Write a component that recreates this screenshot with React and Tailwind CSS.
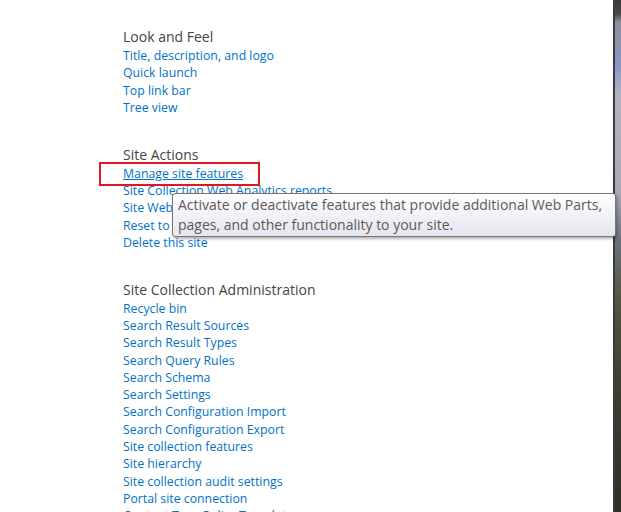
import React from 'react'

const SECTIONS = [
  {
    title: 'Look and Feel',
    links: ['Title, description, and logo', 'Quick launch', 'Top link bar', 'Tree view'],
  },
  {
    title: 'Site Actions',
    links: [
      'Manage site features',
      'Site Collection Web Analytics reports',
      'Site Web Analytics reports',
      'Reset to site definition',
      'Delete this site',
    ],
  },
  {
    title: 'Site Collection Administration',
    links: [
      'Recycle bin',
      'Search Result Sources',
      'Search Result Types',
      'Search Query Rules',
      'Search Schema',
      'Search Settings',
      'Search Configuration Import',
      'Search Configuration Export',
      'Site collection features',
      'Site hierarchy',
      'Site collection audit settings',
      'Portal site connection',
      'Content Type Policy Templates',
    ],
  },
]

export default function App() {
  return (
    <div className="relative flex h-[512px] w-[621px] overflow-hidden bg-white font-['Open_Sans',sans-serif]">
      {/* settings page */}
      <div className="flex flex-1 flex-col gap-[27.5px] pl-[123px] pt-[26px]">
        {SECTIONS.map(s => (
          <div key={s.title}>
            <div className="text-[14px] leading-[21px] text-[#444444]">{s.title}</div>
            <ul>
              {s.links.map(l => (
                <li key={l} className="text-[12.3px] leading-[17.3px] text-[#0072c6]">
                  <a href="#" className={l === 'Manage site features' ? 'underline' : ''}>{l}</a>
                </li>
              ))}
            </ul>
          </div>
        ))}
      </div>

      {/* window edge + desktop */}
      <div className="w-[2px] bg-[#3a3a3a]" />
      <div className="w-[6px] bg-[linear-gradient(to_bottom,#3b3b3b_0px,#474747_14px,#8e8f9e_22px,#8798c4_65px,#b3b4c2_95px,#a9aab8_190px,#6d7280_240px,#52563f_300px,#3d4130_380px,#2e2f27_512px)]" />

      {/* red highlight */}
      <div className="absolute left-[99px] top-[162px] h-[24px] w-[161px] border-2 border-[#e3161e]" />

      {/* tooltip */}
      <div className="absolute left-[172px] top-[193px] h-[44px] w-[444px] rounded-[3px] border border-[#767676] bg-[linear-gradient(to_bottom,#ffffff,#e4e5f0)] px-[5px] pt-[1px] text-[14px] leading-[20px] text-[#5a5a5a] shadow-[1px_2px_3px_rgba(0,0,0,0.3)]">
        Activate or deactivate features that provide additional Web Parts, pages, and other functionality to your site.
      </div>
    </div>
  )
}
